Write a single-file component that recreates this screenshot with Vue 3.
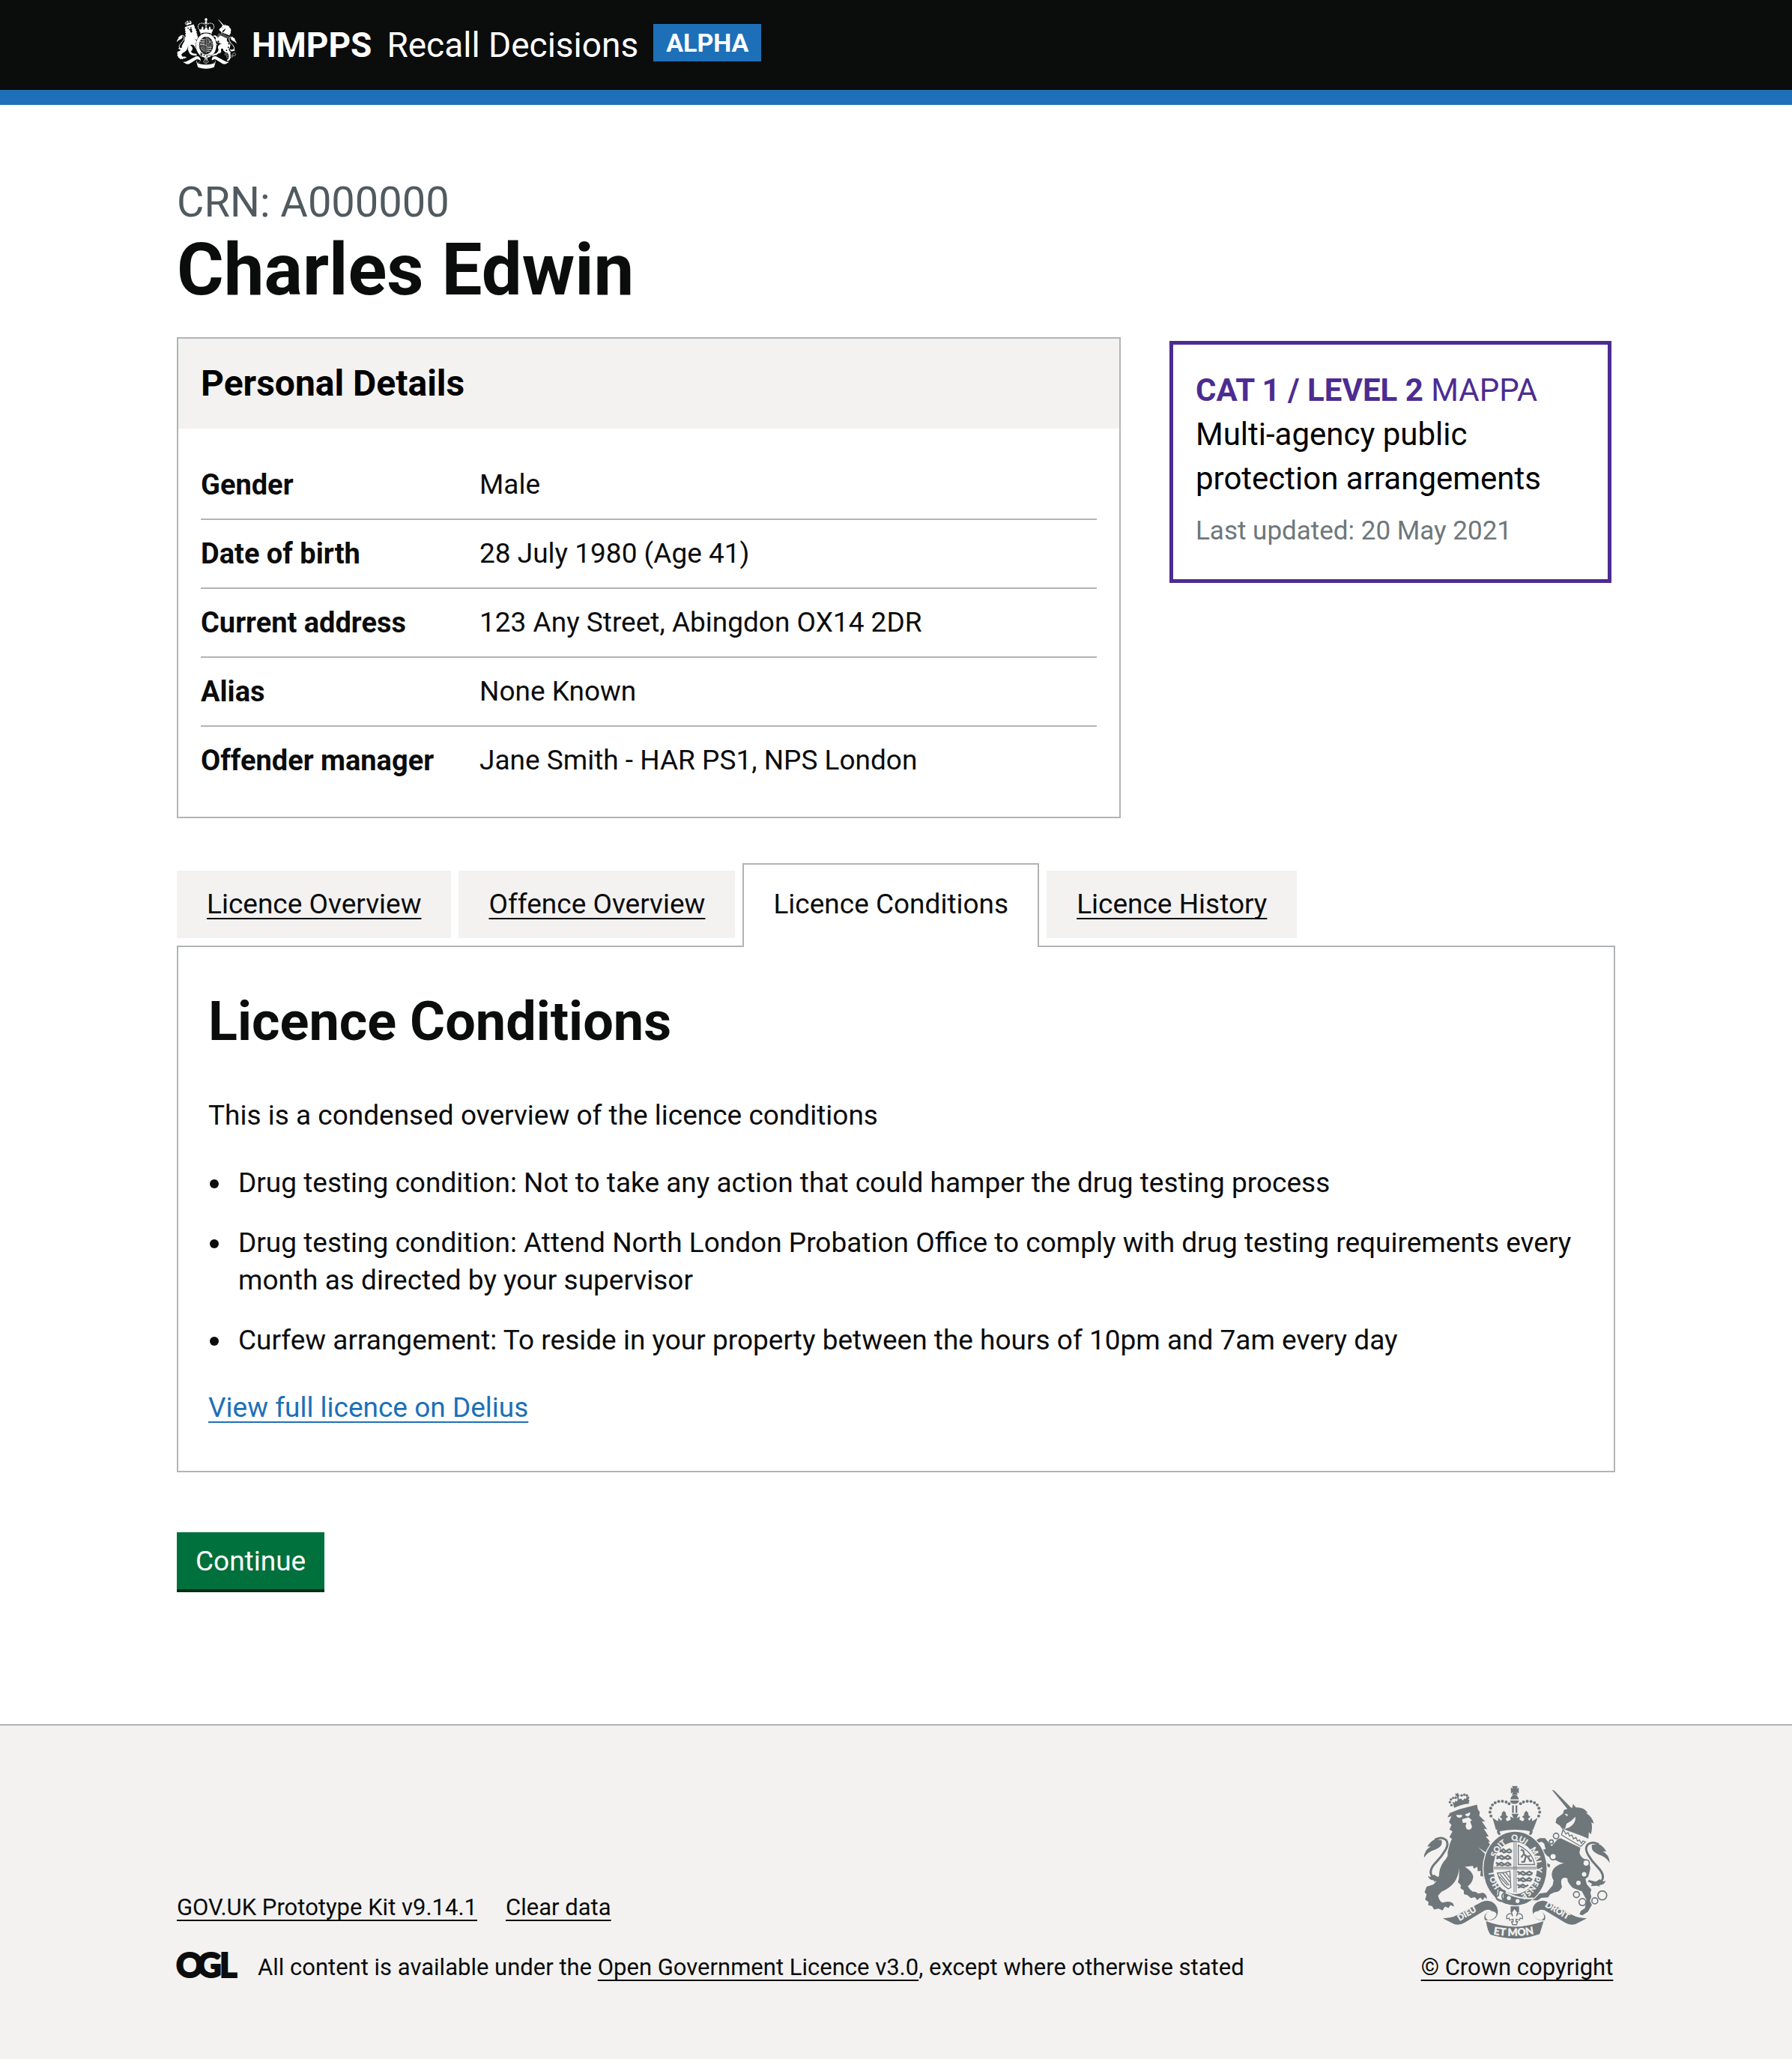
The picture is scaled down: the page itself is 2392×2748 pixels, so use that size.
<script setup>
const details = [
  { label: 'Gender', value: 'Male' },
  { label: 'Date of birth', value: '28 July 1980 (Age 41)' },
  { label: 'Current address', value: '123 Any Street, Abingdon OX14 2DR' },
  { label: 'Alias', value: 'None Known' },
  { label: 'Offender manager', value: 'Jane Smith - HAR PS1, NPS London' },
]

const tabs = [
  { label: 'Licence Overview', selected: false },
  { label: 'Offence Overview', selected: false },
  { label: 'Licence Conditions', selected: true },
  { label: 'Licence History', selected: false },
]

const conditions = [
  'Drug testing condition: Not to take any action that could hamper the drug testing process',
  'Drug testing condition: Attend North London Probation Office to comply with drug testing requirements every month as directed by your supervisor',
  'Curfew arrangement: To reside in your property between the hours of 10pm and 7am every day',
]

// Pearls on the left arch of the main crown; the right arch mirrors them.
const pearls = [
  [330, 189], [326, 173], [329, 157], [336, 144], [347, 135], [361, 130], [376, 129], [391, 132], [403, 139],
]
const smallPearls = [[171, 145], [165, 133], [169, 122], [178, 116], [188, 115], [212, 106], [223, 103], [233, 106], [238, 115], [238, 127]]
const chain = [[592, 269, 11], [573, 293, 8], [580, 352, 13], [713, 378, 13], [674, 505, 12], [698, 535, 14], [748, 530, 12], [778, 508, 18]]
</script>

<template>
  <svg class="defs" aria-hidden="true">
    <symbol id="arms" viewBox="60 66 750 618" preserveAspectRatio="none">
      <g fill="currentColor">
        <!-- main crown -->
        <path d="M414 68h24l-5 11 9-5v24l-9-5 5 11h-24l5-11-9 5V74l9 5z" />
        <path d="M408 122q4-18 17-18t17 18zM407 126h36q-2 14-18 14t-18-14z" />
        <path d="M415 146h7v30h-7zM429 146h7v30h-7z" />
        <circle v-for="(p, i) in pearls" :key="'l' + i" :cx="p[0]" :cy="p[1]" r="6" />
        <circle v-for="(p, i) in pearls" :key="'r' + i" :cx="852 - p[0]" :cy="p[1]" r="6" />
        <path d="M336 196l22 14 2-14 10 12 5-8-10-8 8-6 1-10 8-8 8 8 1 10 8 6-10 8 6 10 14-6-1-14 13 8-8-18h28l-8 18 13-8-1 14 14 6 6-10-10-8 8-6 1-10 8-8 8 8 1 10 8 6-10 8 5 8 10-12 2 14 22-14-18 48q-75-14-150 0z" />
        <path d="M354 250q0-12 14-14 58-10 116 0 14 2 14 14 0 10-8 16l-8-4q6-6 4-12-60-12-120 0-2 6 4 12l-8 4q-8-6-8-16z" />
        <!-- lion's crown -->
        <circle v-for="(p, i) in smallPearls" :key="'s' + i" :cx="p[0]" :cy="p[1]" r="5" />
        <path d="M187 97l5 2 5-4 2 7 6 3-5 5 1 12 8-4 8 8 6-8 6 2 3-8 6 3 4 24q-30 2-60 17l-7-25 9 4 3-8 7 4 2-9-3-12-6-4z" />
        <!-- lion -->
        <path d="M161 187l5-11 36-14 72-19 3 18 8 12-2 14 24 24-14-1 22 32-14-3 20 32-12 0 18 22-8-2 12 22-22 22-30-20 36 34 14 30 8 42-6 22-12 6-8-8-8 4-4-12-12-4 2-20-12 2-2-18-14 8-4-12-32 4q32 20 34 40-4 26-22 38 8 16 20 22 12-2 22 8l18-4q18 6 16 26l-8-8-8 12-10-10-12 10-10-12-16 4-14-12-14-4 0-14-14-10 2-12-12-12 4-16 2-44q-4 36-20 60-20 26-52 38l-14 16q6 24 18 28l20-4q26 0 26 20l-14-6-8 12-14-6-10 16-16-8-18 4-8-14-16-4 2-12-14-10 6-20-8-10 8-22 26-8q18-14 24-38 0-26 18-54 22-24 16-34 10-46 18-58l-10-8 12-22-12-8 8-18-10-12 10-24-16 6 12-26z" />
        <!-- unicorn -->
        <path d="M575 83l10 3 68 70-12 9z" />
        <path d="M590 216l4-18 26-20 4-14 22-6 12-4 2-14 12 14q32-2 48 22l-8 0q28 18 32 44l-10-6q6 22-2 48l-8-8-2 26-22-10-76-28 22-8q26-16 24-42-16 18-36 28l-6 20h-12l-8-12z" />
        <path d="M598 282l12-4 80 38-4 20q4 22 30 30 14 18 14 34l-8 32-12 10 6 22 18 20-4 14 4 16-6 16 8 16-16 28-22 14-12-4 6-14 16-10 6-34-18-34-36-14q-24-22-22-38-16-8-24 4-4 12 2 30-8 22-32 22l-16 8-8 12-28 2-14 10h-22l8-20 24-8 26-4 24-28 4-20q-16-28 2-50 18-16 40-20-20 0-46-20-22-4-28-16l-22-2 0 12 10 18 30 14-2 12-14-6-4 10-18-16-8-26-12-20 8-12 32-4-6-22-10-8-12 4-10-10 14-8 22 0 26 32z" />
        <!-- unicorn's coronet -->
        <path fill="none" stroke="currentColor" stroke-width="4" d="M620 243l-6 22 78 46 18-18-10-4-6 10-8-14-8 4-6-14-10 6-6-16-10 4-6-14-8 6z" />
      </g>
      <!-- tails -->
      <g v-for="flip in [false, true]" :key="flip" :transform="flip ? 'translate(868 19) scale(-1 1)' : ''">
        <path fill="none" stroke="currentColor" stroke-width="9" d="M104 284q26-14 44 0 14 14 0 40-16 28-40 52-32 34-14 56 16 18 52-2" />
        <path fill="currentColor" d="M60 358q2-34 28-46l-14 0q12-24 34-30l24 4q4 20-12 30l-14 8q-30 8-46 34zM76 430q14 8 24-6l16 10 24-6-8 16 4 8-26-2-10 4 2-6q-20 0-26-18z" />
      </g>
      <!-- facial features and armour links -->
      <g fill="var(--ground)">
        <path d="M190 184l24 0q2 8-10 12-12-2-14-12zM226 182l20-8q2 12-8 16-10 0-12-8zM214 202l26-8 14 12-8 4 8 22q-4 12-14 12t-12-16l4-12-16 0z" />
        <path d="M626 180l14 2-4 8z" />
        <circle cx="705" cy="423" r="9" />
        <circle cx="682" cy="458" r="9" />
      </g>
      <g fill="var(--ground)" stroke="currentColor" stroke-width="5">
        <circle v-for="(c, i) in chain" :key="'c' + i" :cx="c[0]" :cy="c[1]" :r="c[2]" />
      </g>
      <!-- garter -->
      <ellipse cx="427" cy="400" rx="131" ry="151" fill="var(--ground)" />
      <ellipse cx="427" cy="400" rx="127" ry="148" fill="currentColor" />
      <ellipse cx="427" cy="398" rx="88" ry="105" fill="var(--ground)" />
      <path fill="var(--ground)" d="M356 484l26 12-4 34-24-12z" />
      <path fill="none" stroke="var(--ground)" stroke-width="6" d="M384 494q54 30 116 26" />
      <circle cx="402" cy="519" r="8" fill="var(--ground)" />
      <circle cx="437" cy="531" r="8" fill="var(--ground)" />
      <path fill="none" stroke="currentColor" stroke-width="5" d="M362 490q20-8 26 4l-10 8q-8 10 0 20l-6 10q-18-2-22-16l10-8z" />
      <!-- quarterings -->
      <g fill="none" stroke="currentColor" stroke-width="4">
        <path d="M423 294v202M431 294v202M340 395h174M340 401h174" stroke-width="3" />
        <path stroke-width="7" d="M362 322l8 6 10-6 10 8 14-8 10 8M364 332l10-2 8 6 10-4 12 4 10-4M350 348l10 6 12-6 12 8 14-8 12 8M352 360l12-4 10 6 12-4 12 4 14-4M350 376l10 6 12-6 12 8 14-8 12 8M352 388l12-4 10 4 12-4 12 4 14-4" />
        <path stroke-width="7" d="M436 412l10 6 12-6 12 8 14-8 14 8M438 424l12-4 10 6 12-4 12 4 12-4M436 438l10 6 12-6 12 8 14-8 12 8M438 450l12-4 10 6 12-4 20 2M436 464l10 6 12-6 12 8 10-6M438 477l12-4 16 4" />
        <path d="M440 306v78h66q-8-50-66-78z" />
        <path stroke-width="7" d="M450 324l10 4 4 16 12 8 12-2M460 344l-8 12M470 352l-6 22M478 352l10 18 8-2M452 374l14-2" />
        <path d="M356 418q26 0 50-8l4 66-10 6q-30-16-44-64zM366 422l38 46M378 418l28 36M390 416l16 22M364 432l32 36" />
      </g>
      <!-- ribbons -->
      <g fill="currentColor">
        <path d="M136 600q34 0 60-14l86-46q28-18 52-6 24 14 24 42-2 24-26 32l-26 0q-8-18 8-30l18-8q-8-8-26-2l-82 50q-20 12-42 6z" />
        <path d="M716 600q-34 0-60-14l-86-46q-28-18-52-6-24 14-20 42 4 24 26 32l22 0q8-18-8-30l-18-8q8-8 26-2l82 50q20 12 42 6z" />
        <path d="M310 612q112 44 232 0l-16 52q-96 34-198 2-12-14-18-54z" />
        <path d="M409 552h34v24h-34z" />
      </g>
      <path fill="var(--ground)" d="M324 570q30 2 28 16-6 18-30 22-16-6-14-18 4-14 16-20zM528 570q-30 2-28 16 6 18 30 22 16-6 14-18-4-14-16-20z" />
      <path fill="var(--ground)" stroke="currentColor" stroke-width="4" d="M425 560l12 16-4 16q4-14 14-10 12 4 10 20l-10-2-2 8-14-4v10h6l-4 12h-16l-4-12h6v-10l-14 4-2-8-10 2q-2-16 10-20 10-4 14 10l-4-16z" />
    </symbol>
  </svg>

  <header class="header">
    <div class="container header-row">
      <a class="brand" href="#">
        <svg class="header-crest" aria-hidden="true"><use href="#arms" /></svg>
        <strong>HMPPS</strong>
        <span>Recall Decisions</span>
      </a>
      <strong class="phase">ALPHA</strong>
    </div>
  </header>

  <main class="container main">
    <p class="crn">CRN: A000000</p>
    <h1 class="name">Charles Edwin</h1>

    <div class="columns">
      <section class="card">
        <h2 class="card-title">Personal Details</h2>
        <dl class="summary">
          <div v-for="row in details" :key="row.label" class="summary-row">
            <dt>{{ row.label }}</dt>
            <dd>{{ row.value }}</dd>
          </div>
        </dl>
      </section>

      <aside class="mappa">
        <h2 class="mappa-title"><strong>CAT 1 / LEVEL 2</strong> MAPPA</h2>
        <p class="mappa-text">Multi-agency public protection arrangements</p>
        <p class="mappa-date">Last updated: 20 May 2021</p>
      </aside>
    </div>

    <ul class="tabs">
      <li v-for="tab in tabs" :key="tab.label" class="tab" :class="{ selected: tab.selected }">
        <a href="#">{{ tab.label }}</a>
      </li>
    </ul>
    <section class="panel">
      <h2 class="panel-title">Licence Conditions</h2>
      <p>This is a condensed overview of the licence conditions</p>
      <ul class="conditions">
        <li v-for="item in conditions" :key="item">{{ item }}</li>
      </ul>
      <p><a class="link" href="#">View full licence on Delius</a></p>
    </section>

    <button class="button" type="button">Continue</button>
  </main>

  <footer class="footer">
    <div class="container footer-row">
      <div class="footer-meta">
        <nav class="footer-links">
          <a href="#">GOV.UK Prototype Kit v9.14.1</a>
          <a href="#">Clear data</a>
        </nav>
        <div class="licence">
          <svg class="ogl" viewBox="0 0 82 34" role="img" aria-label="Open Government Licence">
            <text x="-1 27 57" y="33">OGL</text>
          </svg>
          <span>All content is available under the <a href="#">Open Government Licence v3.0</a>, except where otherwise stated</span>
        </div>
      </div>
      <div class="copyright">
        <svg class="footer-crest" viewBox="60 66 750 618" aria-hidden="true">
          <defs>
            <path id="garter-line" d="M427 511A98 113 0 0 1 427 287A98 113 0 0 1 427 511" />
            <path id="ribbon-left" d="M204 612L308 551" />
            <path id="ribbon-right" d="M546 552L668 624" />
            <path id="ribbon-centre" d="M326 661Q426 684 530 657" />
          </defs>
          <use href="#arms" x="60" y="66" width="750" height="618" />
          <g class="motto">
            <text><textPath href="#garter-line" startOffset="72">HO</textPath></text>
            <text><textPath href="#garter-line" startOffset="128">I</textPath></text>
            <text><textPath href="#garter-line" startOffset="196">SOIT</textPath></text>
            <text><textPath href="#garter-line" startOffset="292">QUI</textPath></text>
            <text><textPath href="#garter-line" startOffset="376">MAL</textPath></text>
            <text><textPath href="#garter-line" startOffset="454">Y</textPath></text>
            <text><textPath href="#garter-line" startOffset="488">PENSE</textPath></text>
          </g>
          <g class="motto ribbon">
            <text><textPath href="#ribbon-left">DIEU</textPath></text>
            <text><textPath href="#ribbon-right">DROIT</textPath></text>
            <text class="ribbon-large"><textPath href="#ribbon-centre" startOffset="14">ET MON</textPath></text>
          </g>
        </svg>
        <a href="#">© Crown copyright</a>
      </div>
    </div>
  </footer>
</template>

<style>
body {
  margin: 0;
  background: #f3f2f1;
}

#app {
  background: #fff;
  color: #0b0c0c;
  font-family: Roboto, "Liberation Sans", sans-serif;
  font-size: 37px;
  line-height: 50px;
}
</style>

<style scoped>
h1, h2, p, ul, dl, dd {
  margin: 0;
  padding: 0;
}

a {
  color: inherit;
  text-decoration: underline;
  text-decoration-thickness: 2px;
  text-decoration-skip-ink: none;
  text-underline-offset: 6px;
}

.defs {
  position: absolute;
  width: 0;
  height: 0;
}

.container {
  box-sizing: border-box;
  width: calc(100% - 60px);
  max-width: 1920px;
  margin: 0 auto;
}

.header {
  background: #0b0c0c;
  border-bottom: 20px solid #1d70b8;
  color: #fff;
}

.header-row {
  display: flex;
  align-items: center;
  gap: 20px;
  height: 120px;
}

.brand {
  display: flex;
  align-items: center;
  gap: 20px;
  font-size: 46px;
  line-height: 60px;
  text-decoration: none;
}

.header-crest {
  width: 80px;
  height: 68px;
  margin-bottom: 4px;
  --ground: #0b0c0c;
}

.phase {
  padding: 0 17px;
  margin-bottom: 6px;
  background: #1d70b8;
  font-size: 34px;
  line-height: 50px;
}

.main {
  padding: 100px 0 180px;
}

.crn {
  color: #505a5f;
  font-size: 56px;
  line-height: 60px;
}

.name {
  margin-bottom: 30px;
  font-size: 96px;
  line-height: 120px;
}

.columns {
  display: grid;
  grid-template-columns: 21fr 10fr;
  align-items: start;
  gap: 60px;
  margin-bottom: 60px;
}

.card {
  border: 2px solid #b1b4b6;
}

.card-title {
  padding: 30px;
  background: #f3f2f1;
  color: #000;
  font-size: 48px;
  line-height: 60px;
}

.summary {
  padding: 30px;
}

.summary-row {
  display: grid;
  grid-template-columns: 372px 1fr;
  padding: 20px 0;
  border-bottom: 2px solid #b1b4b6;
}

.summary-row:last-child {
  border-bottom: 0;
}

dt {
  font-size: 38px;
  font-weight: 700;
}

.mappa {
  margin: 5px;
  padding: 31px 30px 39px;
  border: 5px solid #4c2c92;
  color: #000;
  font-size: 42px;
  line-height: 59px;
}

.mappa-title {
  color: #4c2c92;
  font-size: 42px;
  font-weight: 400;
}

.mappa-date {
  margin-top: 16px;
  color: #6f777b;
  font-size: 35px;
  line-height: 50px;
}

.tabs {
  display: flex;
  align-items: flex-end;
  gap: 10px;
  list-style: none;
}

.tab {
  margin-bottom: 10px;
  padding: 20px 40px;
  background: #f3f2f1;
}

.tab.selected {
  position: relative;
  margin-bottom: -2px;
  padding: 28px 39px 32px;
  border: 2px solid #b1b4b6;
  border-bottom: 0;
  background: #fff;
}

.tab.selected a {
  text-decoration: none;
}

.panel {
  padding: 60px 40px 59px;
  border: 2px solid #b1b4b6;
}

.panel-title {
  margin-bottom: 60px;
  font-size: 72px;
  line-height: 80px;
}

.conditions {
  display: flex;
  flex-direction: column;
  gap: 30px;
  margin: 40px 0;
  padding-left: 40px;
  list-style: none;
}

.conditions li {
  position: relative;
}

.conditions li::before {
  content: "";
  position: absolute;
  top: 20px;
  left: -38px;
  width: 12px;
  height: 12px;
  border-radius: 50%;
  background: #0b0c0c;
}

.link {
  color: #1d70b8;
}

.button {
  display: block;
  margin-top: 80px;
  padding: 14px 25px 12px;
  border: 0;
  background: #00703c;
  box-shadow: 0 4px 0 #002d18;
  color: #fff;
  font: inherit;
}

.footer {
  padding: 80px 0 102px;
  border-top: 2px solid #b1b4b6;
  background: #f3f2f1;
  font-size: 31px;
  line-height: 40px;
}

.footer-row {
  display: flex;
  align-items: flex-end;
  justify-content: space-between;
}

.footer-links {
  display: flex;
  gap: 38px;
  margin-bottom: 40px;
}

.licence {
  display: flex;
  gap: 26px;
}

.ogl {
  width: 82px;
  height: 34px;
  overflow: visible;
  fill: #0b0c0c;
  stroke: #0b0c0c;
  stroke-width: 2px;
  font-family: Lato, sans-serif;
  font-size: 45px;
  font-weight: 900;
}

.copyright {
  display: flex;
  flex-direction: column;
  align-items: center;
  gap: 18px;
  width: 262px;
}

.footer-crest {
  width: 250px;
  height: 205px;
  color: #6f777b;
  --ground: #f3f2f1;
}

.motto {
  fill: #f3f2f1;
  stroke: #f3f2f1;
  stroke-width: 1px;
  font-family: Lato, sans-serif;
  font-size: 32px;
  font-weight: 700;
}

.ribbon {
  font-size: 34px;
  font-weight: 900;
}

.ribbon-large {
  font-size: 42px;
}
</style>
